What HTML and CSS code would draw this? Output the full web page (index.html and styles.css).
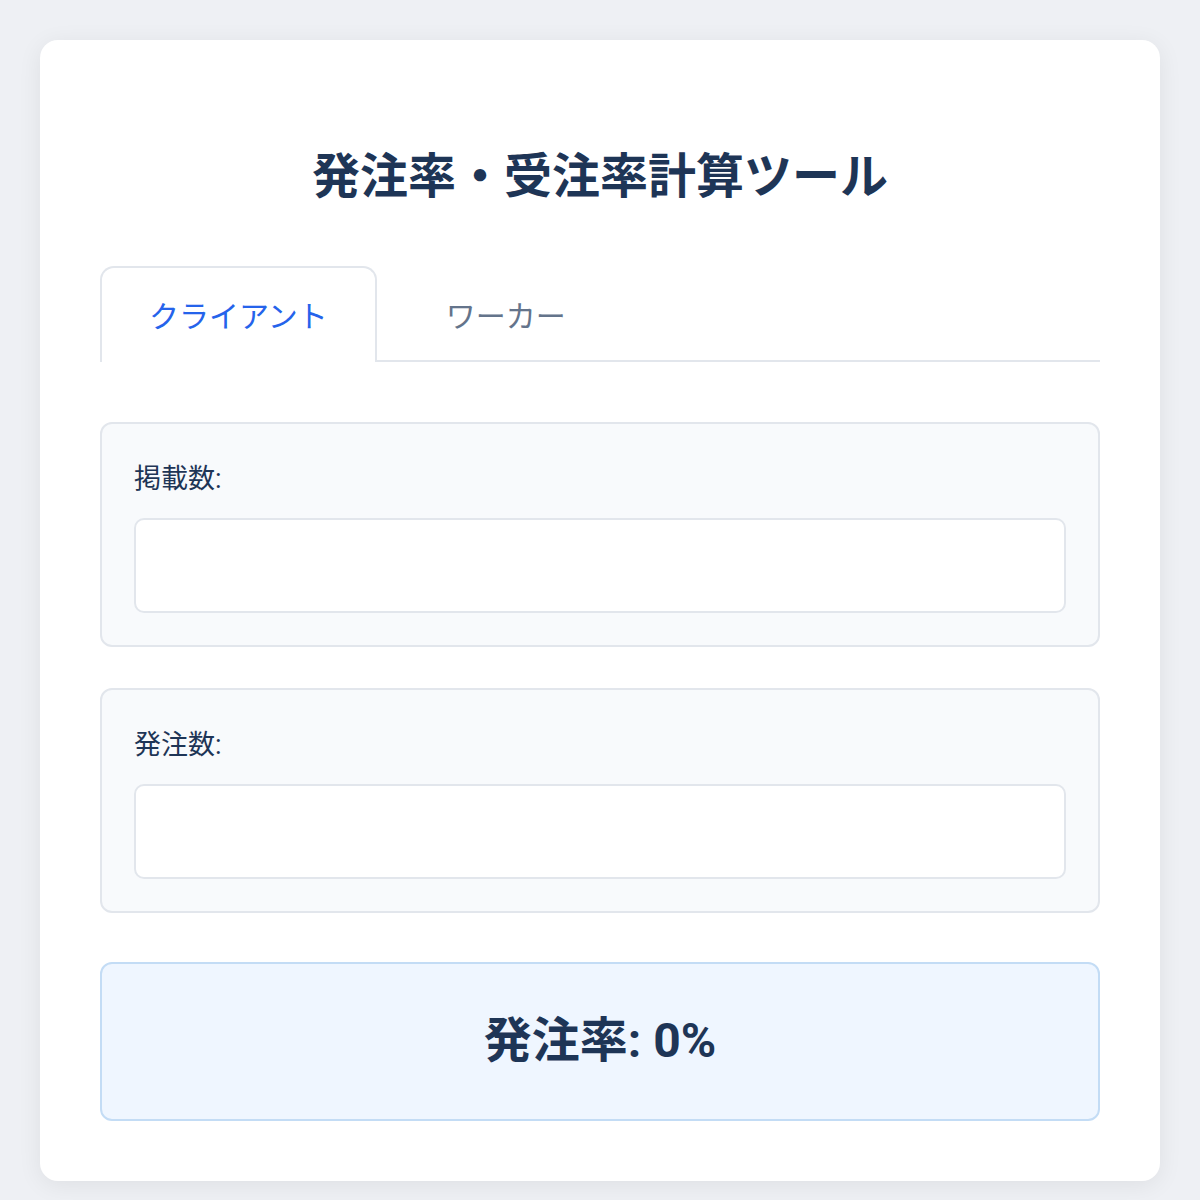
FILE: index.html
```html
<!DOCTYPE html>
<html lang="ja">
<head>
<meta charset="utf-8">
<title>発注率・受注率計算ツール</title>
<link rel="stylesheet" href="styles.css">
</head>
<body>
<div class="card">
  <h1 class="title">発注率・受注率計算ツール</h1>
  <div class="tabs">
    <div class="tab active">クライアント</div>
    <div class="tab">ワーカー</div>
  </div>
  <div class="group">
    <label class="label">掲載数:</label>
    <input class="input" type="number">
  </div>
  <div class="group">
    <label class="label">発注数:</label>
    <input class="input" type="number">
  </div>
  <div class="result">発注率: 0%</div>
</div>
</body>
</html>
```

FILE: styles.css
```css
* { box-sizing: border-box; }
html, body { margin: 0; padding: 0; }
body {
  background: #eef0f4;
  font-family: Roboto, "Noto Sans CJK JP", sans-serif;
  padding: 40px;
}
.card {
  background: #ffffff;
  border-radius: 18px;
  box-shadow: 0 4px 24px rgba(0, 0, 0, 0.07);
  padding: 108px 60px 60px;
}
.title {
  margin: 0 0 60px;
  font-size: 48px;
  line-height: 58px;
  font-weight: 700;
  color: #1e3556;
  text-align: center;
}
.tabs {
  display: flex;
  gap: 20px;
  border-bottom: 2px solid #e2e6ec;
  margin-bottom: 60px;
}
.tab {
  font-size: 30px;
  line-height: 43px;
  padding: 27px 47px 24px;
  color: #64748b;
  border: 2px solid transparent;
  border-bottom: none;
  border-radius: 14px 14px 0 0;
  margin-bottom: -2px;
}
.tab.active {
  color: #2563eb;
  background: #ffffff;
  border-color: #e2e6ec;
}
.group {
  background: #f8fafc;
  border: 2px solid #e2e6ec;
  border-radius: 12px;
  padding: 37px 32px 32px;
  margin-bottom: 41px;
  display: flex;
  flex-direction: column;
}
.group + .group { margin-bottom: 49px; }
.label {
  font-size: 27px;
  line-height: 36px;
  color: #1e3556;
  margin-bottom: 21px;
}
.input {
  height: 95px;
  border: 2px solid #e2e6ec;
  border-radius: 10px;
  background: #ffffff;
  font-size: 24px;
  padding: 0 20px;
  width: 100%;
  outline: none;
}
.result {
  background: #eff6ff;
  border: 2px solid #c3dcf5;
  border-radius: 12px;
  text-align: center;
  font-size: 48px;
  line-height: 58px;
  font-weight: 700;
  color: #1e3556;
  padding: 48px 0 49px;
}
```
